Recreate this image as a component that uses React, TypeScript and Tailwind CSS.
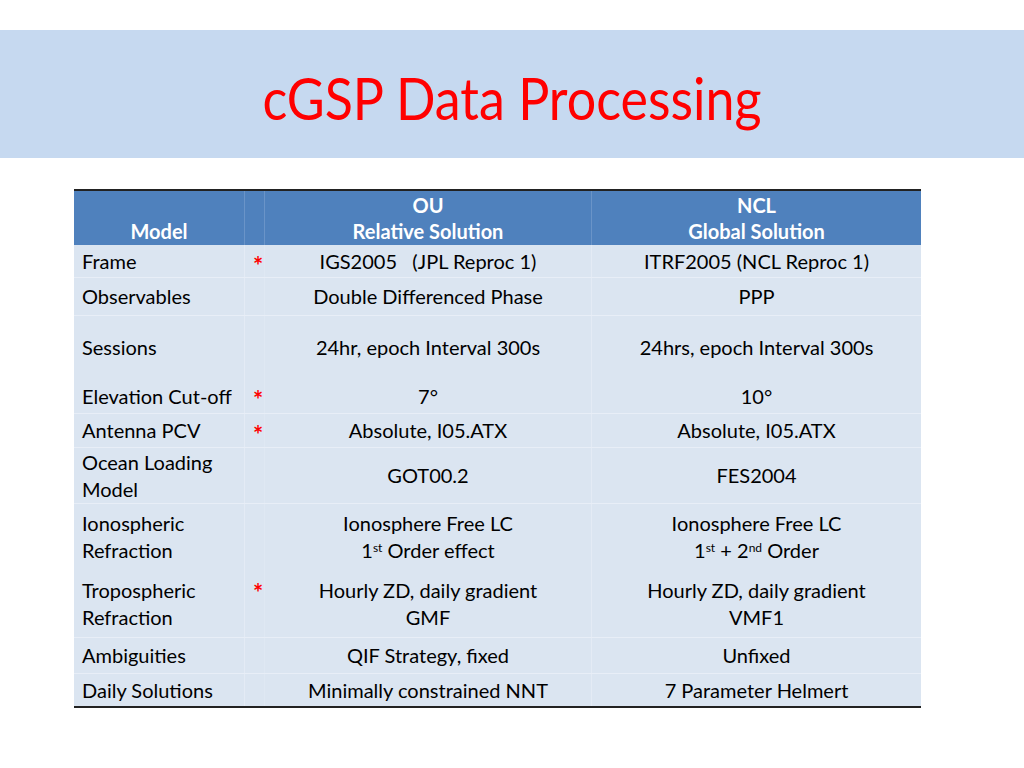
import React from "react";

type Row = {
  h: string;
  label: React.ReactNode;
  star?: boolean;
  ou: React.ReactNode;
  ncl: React.ReactNode;
  line?: boolean;
};

const rows: Row[] = [
  { h: "h-[33px]", label: "Frame", star: true, ou: <>IGS2005&nbsp;&nbsp; (JPL Reproc 1)</>, ncl: "ITRF2005 (NCL Reproc 1)", line: true },
  { h: "h-[38px]", label: "Observables", ou: "Double Differenced Phase", ncl: "PPP", line: true },
  { h: "h-[63px]", label: "Sessions", ou: "24hr, epoch Interval 300s", ncl: "24hrs, epoch Interval 300s" },
  { h: "h-[35px]", label: "Elevation Cut-off", star: true, ou: "7°", ncl: "10°", line: true },
  { h: "h-[34px]", label: "Antenna PCV", star: true, ou: "Absolute, I05.ATX", ncl: "Absolute, I05.ATX", line: true },
  { h: "h-[56px]", label: <>Ocean Loading<br />Model</>, ou: "GOT00.2", ncl: "FES2004", line: true },
  {
    h: "h-[66px]",
    label: <>Ionospheric<br />Refraction</>,
    ou: <>Ionosphere Free LC<br />1<sup className="text-[12px]">st</sup> Order effect</>,
    ncl: <>Ionosphere Free LC<br />1<sup className="text-[12px]">st</sup> + 2<sup className="text-[12px]">nd</sup> Order</>,
  },
  { h: "h-[68px]", label: <>Tropospheric<br />Refraction</>, star: true, ou: <>Hourly ZD, daily gradient<br />GMF</>, ncl: <>Hourly ZD, daily gradient<br />VMF1</>, line: true },
  { h: "h-[36px]", label: "Ambiguities", ou: "QIF Strategy, fixed", ncl: "Unfixed", line: true },
  { h: "h-[32px]", label: "Daily Solutions", ou: "Minimally constrained NNT", ncl: "7 Parameter Helmert" },
];

export default function App() {
  return (
    <div className="w-[1024px] h-[768px] bg-white font-['Lato',sans-serif] text-black pt-[30px]">
      {/* title band */}
      <div className="h-[128px] bg-[#c6d9f0] flex items-center justify-center">
        <h1 className="text-[#ff0000] text-[52px] leading-none pt-[8px] scale-y-[1.1]">cGSP Data Processing</h1>
      </div>

      <div className="mt-[31px] ml-[74px] w-[847px] border-t-2 border-b-2 border-[#222]">
        {/* header */}
        <div className="flex h-[54px] bg-[#4f81bd] text-white font-bold text-[20px] leading-[26px]">
          <div className="w-[171px] flex items-end justify-center pb-[1px] border-r border-[#6a94c8]">Model</div>
          <div className="w-[20px] border-r border-[#6a94c8]" />
          <div className="w-[327px] flex flex-col items-center justify-end pb-[1px] border-r border-[#6a94c8]">
            <span>OU</span>
            <span>Relative Solution</span>
          </div>
          <div className="flex-1 flex flex-col items-center justify-end pb-[1px]">
            <span>NCL</span>
            <span>Global Solution</span>
          </div>
        </div>

        {/* body */}
        <div className="bg-[#dbe5f1] text-[20px] leading-[27px]">
          {rows.map((r, i) => (
            <div key={i} className={`flex ${r.h} ${r.line ? "border-b border-[#e8eef7]" : ""}`}>
              <div className="w-[171px] flex items-center pl-[8px] border-r border-[#e4ebf5]">
                <span>{r.label}</span>
              </div>
              <div className="w-[20px] flex justify-start pl-[8px] border-r border-[#dfe8f3]">
                {r.star && (
                  <span className={`text-[#ff0000] text-[24px] font-bold leading-none ${r.h === "h-[68px]" ? "pt-[11px]" : "pt-[9px]"}`}>*</span>
                )}
              </div>
              <div className="w-[327px] flex items-center justify-center text-center border-r border-[#e4ebf5]">
                <span>{r.ou}</span>
              </div>
              <div className="flex-1 flex items-center justify-center text-center">
                <span>{r.ncl}</span>
              </div>
            </div>
          ))}
        </div>
      </div>
    </div>
  );
}
